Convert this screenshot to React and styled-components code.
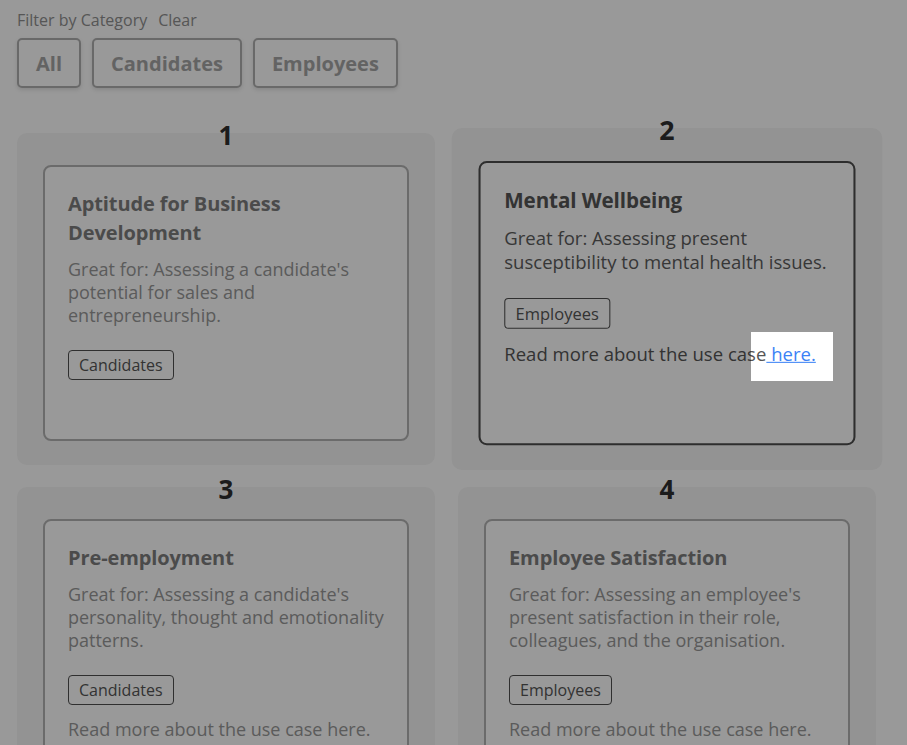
import React, { useLayoutEffect, useRef, useState } from 'react'
import styled, { createGlobalStyle, css } from 'styled-components'

const GlobalStyle = createGlobalStyle`
    body {
        margin: 0;
        background: #fff;
        font-family: "Open Sans", "Noto Sans", sans-serif;
    }
`;

const useCases = [
    {
        id: 1,
        title: 'Aptitude for Business Development',
        text: "Great for: Assessing a candidate's potential for sales and entrepreneurship.",
        tag: 'Candidates',
        readMore: false,
    },
    {
        id: 2,
        title: 'Mental Wellbeing',
        text: 'Great for: Assessing present susceptibility to mental health issues.',
        tag: 'Employees',
        readMore: true,
        active: true,
    },
    {
        id: 3,
        title: 'Pre-employment',
        text: "Great for: Assessing a candidate's personality, thought and emotionality patterns.",
        tag: 'Candidates',
        readMore: true,
    },
    {
        id: 4,
        title: 'Employee Satisfaction',
        text: "Great for: Assessing an employee's present satisfaction in their role, colleagues, and the organisation.",
        tag: 'Employees',
        readMore: true,
    },
]

function App() {
    const linkRef = useRef(null)
    const [spot, setSpot] = useState(null)

    // spotlight hole around the "here." link, like a product tour step
    useLayoutEffect(() => {
        if (linkRef.current) {
            const r = linkRef.current.getBoundingClientRect()
            setSpot({
                top: r.top - 9,
                left: r.left - 15,
                width: r.width + 32,
                height: r.height + 24,
            })
        }
    }, [])

    return (
        <Page>
            <GlobalStyle />
            <FilterHeader>
                <span>Filter by Category</span>
                <span>Clear</span>
            </FilterHeader>
            <FilterRow>
                <FilterButton>All</FilterButton>
                <FilterButton>Candidates</FilterButton>
                <FilterButton>Employees</FilterButton>
            </FilterRow>
            <Grid>
                {useCases.map(item => (
                    <Slot key={item.id} $active={item.active}>
                        <Number>{item.id}</Number>
                        <Card $active={item.active}>
                            <Title $active={item.active}>{item.title}</Title>
                            <Text $active={item.active}>{item.text}</Text>
                            <Tag>{item.tag}</Tag>
                            {item.readMore && (
                                <ReadMore $active={item.active}>
                                    Read more about the use case
                                    {item.active
                                        ? <Link href="#" ref={linkRef}> here.</Link>
                                        : ' here.'}
                                </ReadMore>
                            )}
                        </Card>
                    </Slot>
                ))}
            </Grid>
            {spot && <Spotlight style={spot} />}
        </Page>
    )
}

const Page = styled.div`
    padding: 9px 17px 40px;
`;

const FilterHeader = styled.div`
    display: flex;
    gap: 11px;
    font-size: 16px;
    line-height: 22px;
    color: #8f8f8f;
`;

const FilterRow = styled.div`
    display: flex;
    gap: 11px;
    margin-top: 7px;
`;

const FilterButton = styled.button`
    font-family: inherit;
    font-size: 20px;
    font-weight: 700;
    height: 50px;
    padding: 0 17px;
    background: #fff;
    color: #a6a6a6;
    border: 2px solid #b0b0b0;
    border-radius: 5px;
    box-shadow: 0 2px 4px rgba(0, 0, 0, 0.12);
`;

const Grid = styled.div`
    display: grid;
    grid-template-columns: repeat(2, 418px);
    column-gap: 23px;
    row-gap: 22px;
    margin-top: 45px;
`;

const Slot = styled.div`
    background: #f5f5f5;
    border-radius: 10px;
    padding: 0 26px 24px;
    display: flex;
    flex-direction: column;
    ${p => p.$active && css`
        transform: scale(1.03);
    `}
`;

const Number = styled.div`
    margin-top: -14px;
    height: 32px;
    line-height: 32px;
    text-align: center;
    font-size: 26px;
    font-weight: 700;
    color: #303030;
`;

const Card = styled.div`
    margin-top: 14px;
    height: 276px;
    box-sizing: border-box;
    background: #fff;
    border: 2px solid ${p => p.$active ? '#4d4d4d' : '#b3b3b3'};
    border-radius: 8px;
    padding: 22px 23px;
`;

const Title = styled.h3`
    margin: 0 0 11px;
    font-size: 20px;
    line-height: 29px;
    font-weight: 700;
    letter-spacing: -0.1px;
    color: ${p => p.$active ? '#555' : '#7d7d7d'};
`;

const Text = styled.p`
    margin: 0 0 23px;
    font-size: 18px;
    line-height: 23px;
    color: ${p => p.$active ? '#5c5c5c' : '#989898'};
`;

const Tag = styled.span`
    display: inline-block;
    box-sizing: border-box;
    height: 30px;
    line-height: 28px;
    padding: 0 10px;
    font-size: 16px;
    color: #555;
    border: 1px solid #4f4f4f;
    border-radius: 4px;
`;

const ReadMore = styled.p`
    margin: 13px 0 0;
    font-size: 18px;
    line-height: 23px;
    color: ${p => p.$active ? '#555' : '#989898'};
`;

const Link = styled.a`
    color: #3b82f6;
    text-decoration: underline;
`;

const Spotlight = styled.div`
    position: fixed;
    pointer-events: none;
    box-shadow: 0 0 0 9999px rgba(0, 0, 0, 0.4);
`;

export default App
